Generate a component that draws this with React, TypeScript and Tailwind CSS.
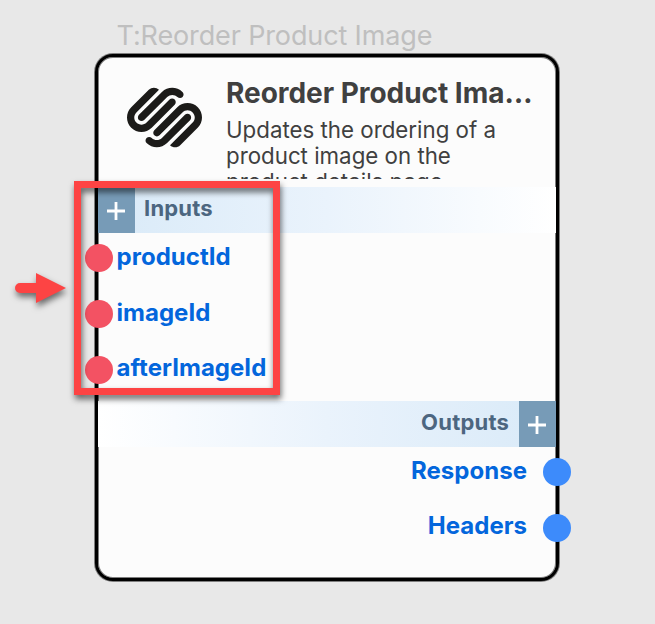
import React from "react";
import { SiSquarespace } from "react-icons/si";

function PlusBox() {
  return (
    <div className="flex h-full w-[37px] shrink-0 items-center justify-center bg-[#779bb7] pt-[3px] pr-[1.5px]">
      <svg width="18" height="18" viewBox="0 0 18 18" stroke="#fff" strokeWidth="2.8">
        <path d="M9 0V18M0 9H18" />
      </svg>
    </div>
  );
}

function InputPort({ name, last = false }: { name: string; last?: boolean }) {
  return (
    <div className="-ml-[13px] flex h-14 items-center">
      <span className="size-7 shrink-0 rounded-full bg-[#f35263]" />
      <span
        className={
          "ml-[3.5px] text-[24px] leading-none font-bold tracking-[0.03px] whitespace-nowrap text-[#0366dc] " +
          (last ? "pb-1" : "pb-0.5")
        }
      >
        {name}
      </span>
    </div>
  );
}

function OutputPort({ name, last = false }: { name: string; last?: boolean }) {
  return (
    <div className="-mr-[15px] flex h-14 items-center justify-end">
      <span
        className={
          "mr-4 text-[24px] leading-none font-bold tracking-[0.03px] whitespace-nowrap text-[#0366dc] " +
          (last ? "pb-1" : "pb-0.5")
        }
      >
        {name}
      </span>
      <span className="size-7 shrink-0 rounded-full bg-[#3d8bfb]" />
    </div>
  );
}

export default function App() {
  return (
    <div className="relative h-[624px] w-[655px] overflow-hidden bg-[#e8e8e8] pt-[20px] pl-[95px] font-['Inter',sans-serif]">
      <div className="ml-[21.5px] h-[33.5px] text-[27px] leading-[32px] tracking-[-0.13px] whitespace-nowrap text-[#bfbfbf]">
        T:Reorder Product Image
      </div>

      <div className="flex h-[527px] w-[464px] flex-col rounded-[18px] border-3 border-black bg-[#fcfcfc] shadow-[0_0_0_1px_rgba(0,0,0,0.45),inset_0_0_0_1px_rgba(0,0,0,0.5)]">
        <div className="flex h-[130px] shrink-0 pl-[29px]">
          <SiSquarespace className="mt-[23px] size-[75px] shrink-0 text-[#1c1b19]" />
          <div className="ml-6 h-[122px] w-[308px] overflow-hidden pt-[19.5px] text-[#404040]">
            <div className="truncate text-[28px] leading-[34px] font-bold tracking-[-0.04px]">Reorder Product Image</div>
            <div className="mt-[6.5px] text-[22.3px] leading-[26px] whitespace-nowrap">
              Updates the ordering of a<br />
              product image on the
              <br />
              product details page.
            </div>
          </div>
        </div>

        <div className="flex h-[46.5px] shrink-0 bg-linear-to-r from-[#d9eaf8] via-[#eaf3fc] to-white">
          <PlusBox />
          <span className="ml-[9px] pt-[6px] text-[22px] leading-[30px] font-bold tracking-[0.2px] text-[#4c6680]">
            Inputs
          </span>
        </div>
        <div className="-mt-[3px] h-[170.5px] shrink-0">
          <InputPort name="productId" />
          <InputPort name="imageId" />
          <InputPort name="afterImageId" last />
        </div>

        <div className="flex h-[46.5px] shrink-0 justify-end bg-linear-to-l from-[#d9eaf8] via-[#eaf3fc] to-white">
          <span className="mr-[10px] pt-[6px] text-[22px] leading-[30px] font-bold tracking-[0.2px] text-[#4c6680]">
            Outputs
          </span>
          <PlusBox />
        </div>
        <div className="-mt-[3px]">
          <OutputPort name="Response" />
          <OutputPort name="Headers" last />
        </div>
      </div>

      <div className="absolute top-[181px] left-[74px] h-[214px] w-[206px] border-7 border-[#fd4444] [filter:drop-shadow(1px_4px_3px_rgba(0,0,0,0.6))]" />
      <svg
        className="absolute top-[268px] left-[10px] overflow-visible [filter:drop-shadow(1px_4px_3px_rgba(0,0,0,0.55))]"
        width="60"
        height="40"
        viewBox="0 0 60 40"
      >
        <path d="M10 15H26V5L56 20L26 35V25H10A5 5 0 0 1 10 15Z" fill="#fd4444" />
      </svg>
    </div>
  );
}
